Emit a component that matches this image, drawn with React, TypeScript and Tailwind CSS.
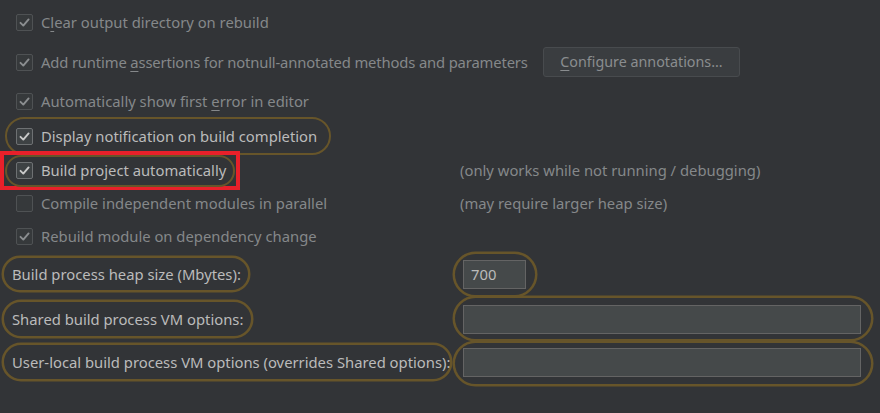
import type { ReactNode } from 'react';

const GOLD = '#67552a';
const BG = '#323437';

function Checkbox({ checked, bright }: { checked: boolean; bright?: boolean }) {
  return (
    <div
      className={`w-[17px] h-[17px] shrink-0 rounded-[2px] border flex items-center justify-center ${
        bright ? 'border-[#6e7173] bg-[#3e4244]' : 'border-[#4f5254] bg-[#36393b]'
      }`}
    >
      {checked && (
        <svg width="13" height="13" viewBox="0 0 13 13">
          <path
            d="M2.5 6.8 L5.3 9.6 L10.6 3.4"
            fill="none"
            stroke={bright ? '#c9c9c9' : '#8b8e90'}
            strokeWidth="1.9"
            strokeLinecap="round"
            strokeLinejoin="round"
          />
        </svg>
      )}
    </div>
  );
}

function CheckRow({ checked, bright, children }: { checked: boolean; bright?: boolean; children: ReactNode }) {
  return (
    <div className="flex items-center gap-[8px]">
      <Checkbox checked={checked} bright={bright} />
      <span className={`whitespace-nowrap ${bright ? 'text-[#bbbbbb]' : 'text-[#85888a]'}`}>{children}</span>
    </div>
  );
}

function Mn({ children }: { children: ReactNode }) {
  return <span className="underline underline-offset-[3px] decoration-1">{children}</span>;
}

function TextField({ value, width }: { value?: string; width: string }) {
  return (
    <div className={`${width} h-[29px] bg-[#45494a] border border-[#646464] flex items-center px-[7px] text-[#bbbbbb]`}>
      {value}
    </div>
  );
}

export default function App() {
  // search highlight blobs behind the bottom fields (stroke first, then fill to merge outlines)
  const blobs = [
    { x: 4, y: 258, w: 244, h: 32 },
    { x: 4, y: 302, w: 247, h: 34 },
    { x: 4, y: 345, w: 446, h: 34 },
    { x: 455, y: 254, w: 80, h: 41 },
    { x: 455, y: 298, w: 416, h: 41 },
    { x: 455, y: 343, w: 416, h: 41 },
  ];

  return (
    <div
      className="relative w-[880px] h-[413px] overflow-hidden bg-[#323437] text-[14.8px] leading-none"
      style={{ fontFamily: '"Noto Sans", "Noto Sans CJK KR", sans-serif' }}
    >
      <svg className="absolute left-0 top-0 pointer-events-none" width="880" height="413">
        {blobs.map((b, i) => (
          <rect key={'s' + i} x={b.x} y={b.y} width={b.w} height={b.h} rx={b.h / 2} fill={BG} stroke={GOLD} strokeWidth="5" />
        ))}
        {blobs.map((b, i) => (
          <rect key={'f' + i} x={b.x} y={b.y} width={b.w} height={b.h} rx={b.h / 2} fill={BG} />
        ))}
      </svg>

      <div className="relative flex flex-col">
        {/* Clear output */}
        <div className="mt-[5px] h-[35px] flex items-center pl-[16px]">
          <CheckRow checked>
            C<Mn>l</Mn>ear output directory on rebuild
          </CheckRow>
        </div>

        {/* Runtime assertions */}
        <div className="mt-[7px] h-[30px] flex items-center pl-[16px]">
          <div className="w-[527px] tracking-[-0.15px]">
            <CheckRow checked>
              Add runtime <Mn>a</Mn>ssertions for notnull-annotated methods and parameters
            </CheckRow>
          </div>
          <div className="w-[197px] h-[30px] rounded-[3px] border border-[#484b4e] bg-[#3a3d40] flex items-center justify-center text-[#8a8d8f] text-[14.3px]">
            <span>
              <Mn>C</Mn>onfigure annotations...
            </span>
          </div>
        </div>

        {/* First error */}
        <div className="mt-[9px] h-[30px] flex items-center pl-[16px]">
          <CheckRow checked>
            Automatically show first <Mn>e</Mn>rror in editor
          </CheckRow>
        </div>

        {/* Notification */}
        <div className="mt-[1px] h-[38px] flex">
          <div className="ml-[5px] h-[38px] rounded-full border-[2.5px] border-[#67552a] flex items-center pl-[9px] pr-[12px]">
            <CheckRow checked bright>
              Display notification on build completion
            </CheckRow>
          </div>
        </div>

        {/* Build automatically */}
        <div className="mt-[-4px] h-[39px] flex items-center">
          <div className="w-[240px] h-[39px] border-4 border-[#e8202a] px-[1px] flex items-center">
            <div className="w-full h-[32px] rounded-full border-[2.5px] border-[#67552a] flex items-center pl-[9px]">
              <CheckRow checked bright>
                Build project automatically
              </CheckRow>
            </div>
          </div>
          <span className="ml-[220px] text-[#85888a] whitespace-nowrap">(only works while not running / debugging)</span>
        </div>

        {/* Parallel */}
        <div className="mt-[-2px] h-[30px] flex items-center pl-[16px]">
          <div className="w-[444px]">
            <CheckRow checked={false}>Compile independent modules in parallel</CheckRow>
          </div>
          <span className="text-[#85888a] whitespace-nowrap">(may require larger heap size)</span>
        </div>

        {/* Rebuild module */}
        <div className="mt-[3px] h-[30px] flex items-center pl-[16px]">
          <CheckRow checked>Rebuild module on dependency change</CheckRow>
        </div>

        {/* Heap size */}
        <div className="mt-[5px] h-[36px] flex items-center">
          <span className="w-[463px] pl-[12px] text-[#bbbbbb] whitespace-nowrap">Build process heap size (Mbytes):</span>
          <TextField value="700" width="w-[63px]" />
        </div>

        {/* Shared VM options */}
        <div className="mt-[8px] h-[38px] flex items-center">
          <span className="w-[463px] pl-[12px] text-[#bbbbbb] whitespace-nowrap">Shared build process VM options:</span>
          <TextField width="w-[398px]" />
        </div>

        {/* User-local VM options */}
        <div className="mt-[5px] h-[38px] flex items-center">
          <span className="w-[463px] pl-[12px] text-[#bbbbbb] whitespace-nowrap">
            User-local build process VM options (overrides Shared options):
          </span>
          <TextField width="w-[398px]" />
        </div>
      </div>
    </div>
  );
}
